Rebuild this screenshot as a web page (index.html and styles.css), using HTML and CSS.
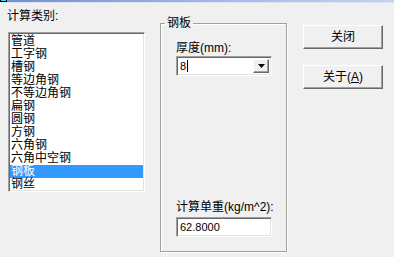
FILE: index.html
```html
<!DOCTYPE html>
<html lang="zh-CN">
<head>
<meta charset="utf-8">
<title>计算</title>
<link rel="stylesheet" href="styles.css">
</head>
<body>
<div class="titlestrip"><span class="ticon"></span></div>
<div class="main">
  <div class="leftcol">
    <div class="label">计算类别:</div>
    <div class="listbox">
      <div class="item">管道</div>
      <div class="item">工字钢</div>
      <div class="item">槽钢</div>
      <div class="item">等边角钢</div>
      <div class="item">不等边角钢</div>
      <div class="item">扁钢</div>
      <div class="item">圆钢</div>
      <div class="item">方钢</div>
      <div class="item">六角钢</div>
      <div class="item">六角中空钢</div>
      <div class="item selected">钢板</div>
      <div class="item">钢丝</div>
    </div>
  </div>
  <fieldset class="group">
    <legend class="gtitle">钢板</legend>
    <div class="gbody">
      <div class="label">厚度(mm):</div>
      <div class="combo">
        <span class="ctext">8<span class="caret"></span></span>
        <span class="cbtn"><svg width="7" height="4" viewBox="0 0 7 4"><polygon points="0,0 7,0 3.5,4" fill="#000"/></svg></span>
      </div>
      <div class="bottom">
        <div class="label">计算单重(kg/m^2):</div>
        <div class="edit">62.8000</div>
      </div>
    </div>
  </fieldset>
  <div class="buttons">
    <div class="btn">关闭</div>
    <div class="btn">关于(<u>A</u>)</div>
  </div>
</div>
</body>
</html>
```
FILE: styles.css
```css
html, body {
  margin: 0;
  padding: 0;
  background: #f0f0f0;
}
body {
  width: 394px;
  height: 257px;
  overflow: hidden;
  font-family: "Liberation Sans", "Noto Sans CJK SC", sans-serif;
  font-size: 12px;
  line-height: 13px;
  color: #000;
}
.titlestrip {
  height: 2px;
  background: linear-gradient(to right, #6f8ed2, #a9bbe6 60%, #c4d0ee);
  border-bottom: 1px solid #dde4f2;
  display: flex;
}
.ticon {
  width: 5px;
  height: 1px;
  background: #2fe0f0;
  border: 1px solid #000;
  border-top: none;
  margin-left: 0;
}
.main {
  display: flex;
  align-items: flex-start;
}
.leftcol {
  margin-left: 7px;
  padding-top: 7px;
}
.label {
  height: 13px;
  white-space: nowrap;
}
.listbox {
  margin-top: 9px;
  margin-left: 1px;
  width: 137px;
  height: 160px;
  box-sizing: border-box;
  background: #fff;
  border-style: solid;
  border-width: 1px;
  border-color: #a0a0a0 #ffffff #ffffff #a0a0a0;
  box-shadow: inset 1px 1px 0 #696969, inset -1px -1px 0 #e3e3e3;
  padding: 2px 1px 1px 1px;
}
.item {
  height: 13px;
  padding-left: 1px;
  white-space: nowrap;
}
.item.selected {
  background: #3399ff;
  color: #fff;
}
.group {
  margin: 14px 0 0 15px;
  padding: 0;
  width: 127px;
  box-sizing: border-box;
  border: 1px solid #a0a0a0;
  box-shadow: inset 1px 1px 0 #fff, 1px 1px 0 #fff;
  min-width: 0;
}
.gtitle {
  margin-left: 4px;
  padding: 0 2px;
  height: 13px;
  background: #f0f0f0;
}
.gbody {
  box-sizing: border-box;
  height: 221px;
  padding: 12px 0 14px 15px;
  display: flex;
  flex-direction: column;
}
.combo {
  margin-top: 1px;
  width: 96px;
  height: 20px;
  box-sizing: border-box;
  background: #fff;
  border-style: solid;
  border-width: 1px;
  border-color: #a0a0a0 #ffffff #ffffff #a0a0a0;
  box-shadow: inset 1px 1px 0 #696969, inset -1px -1px 0 #e3e3e3;
  display: flex;
  align-items: stretch;
  padding: 2px 2px 2px 3px;
}
.ctext {
  flex: 1;
  display: flex;
  align-items: center;
  font-size: 11px;
}
.caret {
  width: 1px;
  height: 12px;
  background: #000;
  margin-left: 1px;
}
.cbtn {
  width: 16px;
  box-sizing: border-box;
  background: #f0f0f0;
  border-style: solid;
  border-width: 1px;
  border-color: #ffffff #696969 #696969 #ffffff;
  box-shadow: inset -1px -1px 0 #a0a0a0;
  display: flex;
  align-items: center;
  justify-content: center;
  padding-bottom: 1px;
}
.bottom {
  margin-top: auto;
}
.edit {
  margin-top: 3px;
  width: 96px;
  height: 20px;
  box-sizing: border-box;
  background: #fff;
  border-style: solid;
  border-width: 1px;
  border-color: #a0a0a0 #ffffff #ffffff #a0a0a0;
  box-shadow: inset 1px 1px 0 #696969, inset -1px -1px 0 #e3e3e3;
  padding: 0 0 0 3px;
  display: flex;
  align-items: center;
  font-size: 11px;
}
.buttons {
  margin: 22px 0 0 16px;
  display: flex;
  flex-direction: column;
  gap: 16px;
}
.btn {
  width: 80px;
  height: 24px;
  box-sizing: border-box;
  background: #f0f0f0;
  border-style: solid;
  border-width: 1px;
  border-color: #ffffff #696969 #696969 #ffffff;
  box-shadow: inset -1px -1px 0 #a0a0a0;
  display: flex;
  align-items: center;
  justify-content: center;
  white-space: nowrap;
}
.btn u {
  text-underline-offset: 1px;
}
```
